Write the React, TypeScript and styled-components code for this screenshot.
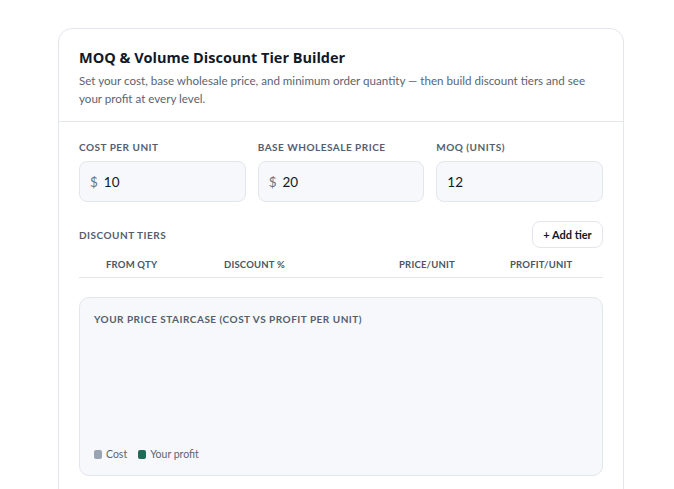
import React from "react";
import styled, { createGlobalStyle } from "styled-components";

const Global = createGlobalStyle`
  html, body { margin: 0; padding: 0; background: #ffffff; }
  body { font-family: Lato, "Open Sans", "Liberation Sans", sans-serif; color: #111827; }
  * { box-sizing: border-box; }
`;

const Page = styled.div`
  padding: 28px 0 0 58px;
  height: 489px;
  overflow: hidden;
`;

const Card = styled.section`
  width: 566px;
  border: 1px solid #e3e6ec;
  border-radius: 14px;
  background: #fff;
  min-height: 500px;
`;

const Header = styled.header`
  padding: 20px 20px 13px;
  border-bottom: 1px solid #e3e6ec;
`;

const Title = styled.h1`
  margin: 0;
  font-family: "Open Sans", Lato, sans-serif;
  font-size: 14.5px;
  line-height: 18px;
  font-weight: 700;
  color: #111827;
`;

const Subtitle = styled.p`
  margin: 5px 0 0;
  font-size: 11.6px;
  line-height: 18px;
  color: #5b6472;
`;

const Body = styled.div`
  padding: 19px 20px 20px;
`;

const Fields = styled.div`
  display: grid;
  grid-template-columns: repeat(3, 1fr);
  gap: 12px;
`;

const Field = styled.label`
  display: flex;
  flex-direction: column;
  gap: 8px;
`;

const Label = styled.span`
  font-size: 10px;
  line-height: 12px;
  font-weight: 700;
  letter-spacing: 0.5px;
  text-transform: uppercase;
  color: #555e6e;
`;

const InputBox = styled.div`
  height: 41px;
  border: 1px solid #e3e6ec;
  border-radius: 8px;
  background: #f7f8fb;
  display: flex;
  align-items: center;
  padding: 0 10px;
  gap: 6px;
  font-size: 13.5px;
  color: #111827;
`;

const Prefix = styled.span`
  color: #6b7280;
`;

const Value = styled.span`
  color: #111827;
`;

const Toolbar = styled.div`
  margin-top: 19px;
  display: flex;
  align-items: center;
  justify-content: space-between;
`;

const AddButton = styled.button`
  height: 27px;
  width: 71px;
  padding: 0;
  border: 1px solid #e3e6ec;
  border-radius: 8px;
  background: #fff;
  font-family: inherit;
  font-size: 11px;
  font-weight: 700;
  color: #111827;
`;

const TableHead = styled.div`
  display: grid;
  grid-template-columns: 27px 118px 175px 111px 1fr;
  padding: 11px 0 6px;
  border-bottom: 1px solid #e3e6ec;
`;

const Th = styled.span`
  font-size: 9.5px;
  line-height: 12px;
  font-weight: 700;
  text-transform: uppercase;
  color: #4b5563;
  letter-spacing: 0.2px;
`;

const Chart = styled.div`
  margin-top: 19px;
  height: 179px;
  border: 1px solid #e3e6ec;
  border-radius: 10px;
  background: #f7f8fb;
  padding: 14px;
  display: flex;
  flex-direction: column;
  justify-content: space-between;
`;

const ChartTitle = styled.div`
  font-size: 10px;
  line-height: 14px;
  font-weight: 700;
  letter-spacing: 0.5px;
  text-transform: uppercase;
  color: #555e6e;
`;

const Legend = styled.div`
  display: flex;
  align-items: center;
  gap: 11px;
  font-size: 10.5px;
  line-height: 14px;
  color: #5b6472;
`;

const LegendItem = styled.span`
  display: inline-flex;
  align-items: center;
  gap: 4px;
`;

const Swatch = styled.span<{ $color: string }>`
  width: 8px;
  height: 9px;
  border-radius: 2px;
  background: ${(p) => p.$color};
`;

export default function App() {
  return (
    <>
      <Global />
      <Page>
        <Card>
          <Header>
            <Title>MOQ &amp; Volume Discount Tier Builder</Title>
            <Subtitle>
              Set your cost, base wholesale price, and minimum order quantity — then build discount tiers and see your
              profit at every level.
            </Subtitle>
          </Header>
          <Body>
            <Fields>
              <Field>
                <Label>Cost per unit</Label>
                <InputBox>
                  <Prefix>$</Prefix>
                  <Value>10</Value>
                </InputBox>
              </Field>
              <Field>
                <Label>Base wholesale price</Label>
                <InputBox>
                  <Prefix>$</Prefix>
                  <Value>20</Value>
                </InputBox>
              </Field>
              <Field>
                <Label>MOQ (units)</Label>
                <InputBox>
                  <Value>12</Value>
                </InputBox>
              </Field>
            </Fields>
            <Toolbar>
              <Label>Discount tiers</Label>
              <AddButton>+ Add tier</AddButton>
            </Toolbar>
            <TableHead>
              <span />
              <Th>From qty</Th>
              <Th>Discount %</Th>
              <Th>Price/unit</Th>
              <Th>Profit/unit</Th>
            </TableHead>
            <Chart>
              <ChartTitle>Your price staircase (cost vs profit per unit)</ChartTitle>
              <Legend>
                <LegendItem>
                  <Swatch $color="#9aa3b2" />
                  Cost
                </LegendItem>
                <LegendItem>
                  <Swatch $color="#1e6b56" />
                  Your profit
                </LegendItem>
              </Legend>
            </Chart>
          </Body>
        </Card>
      </Page>
    </>
  );
}
